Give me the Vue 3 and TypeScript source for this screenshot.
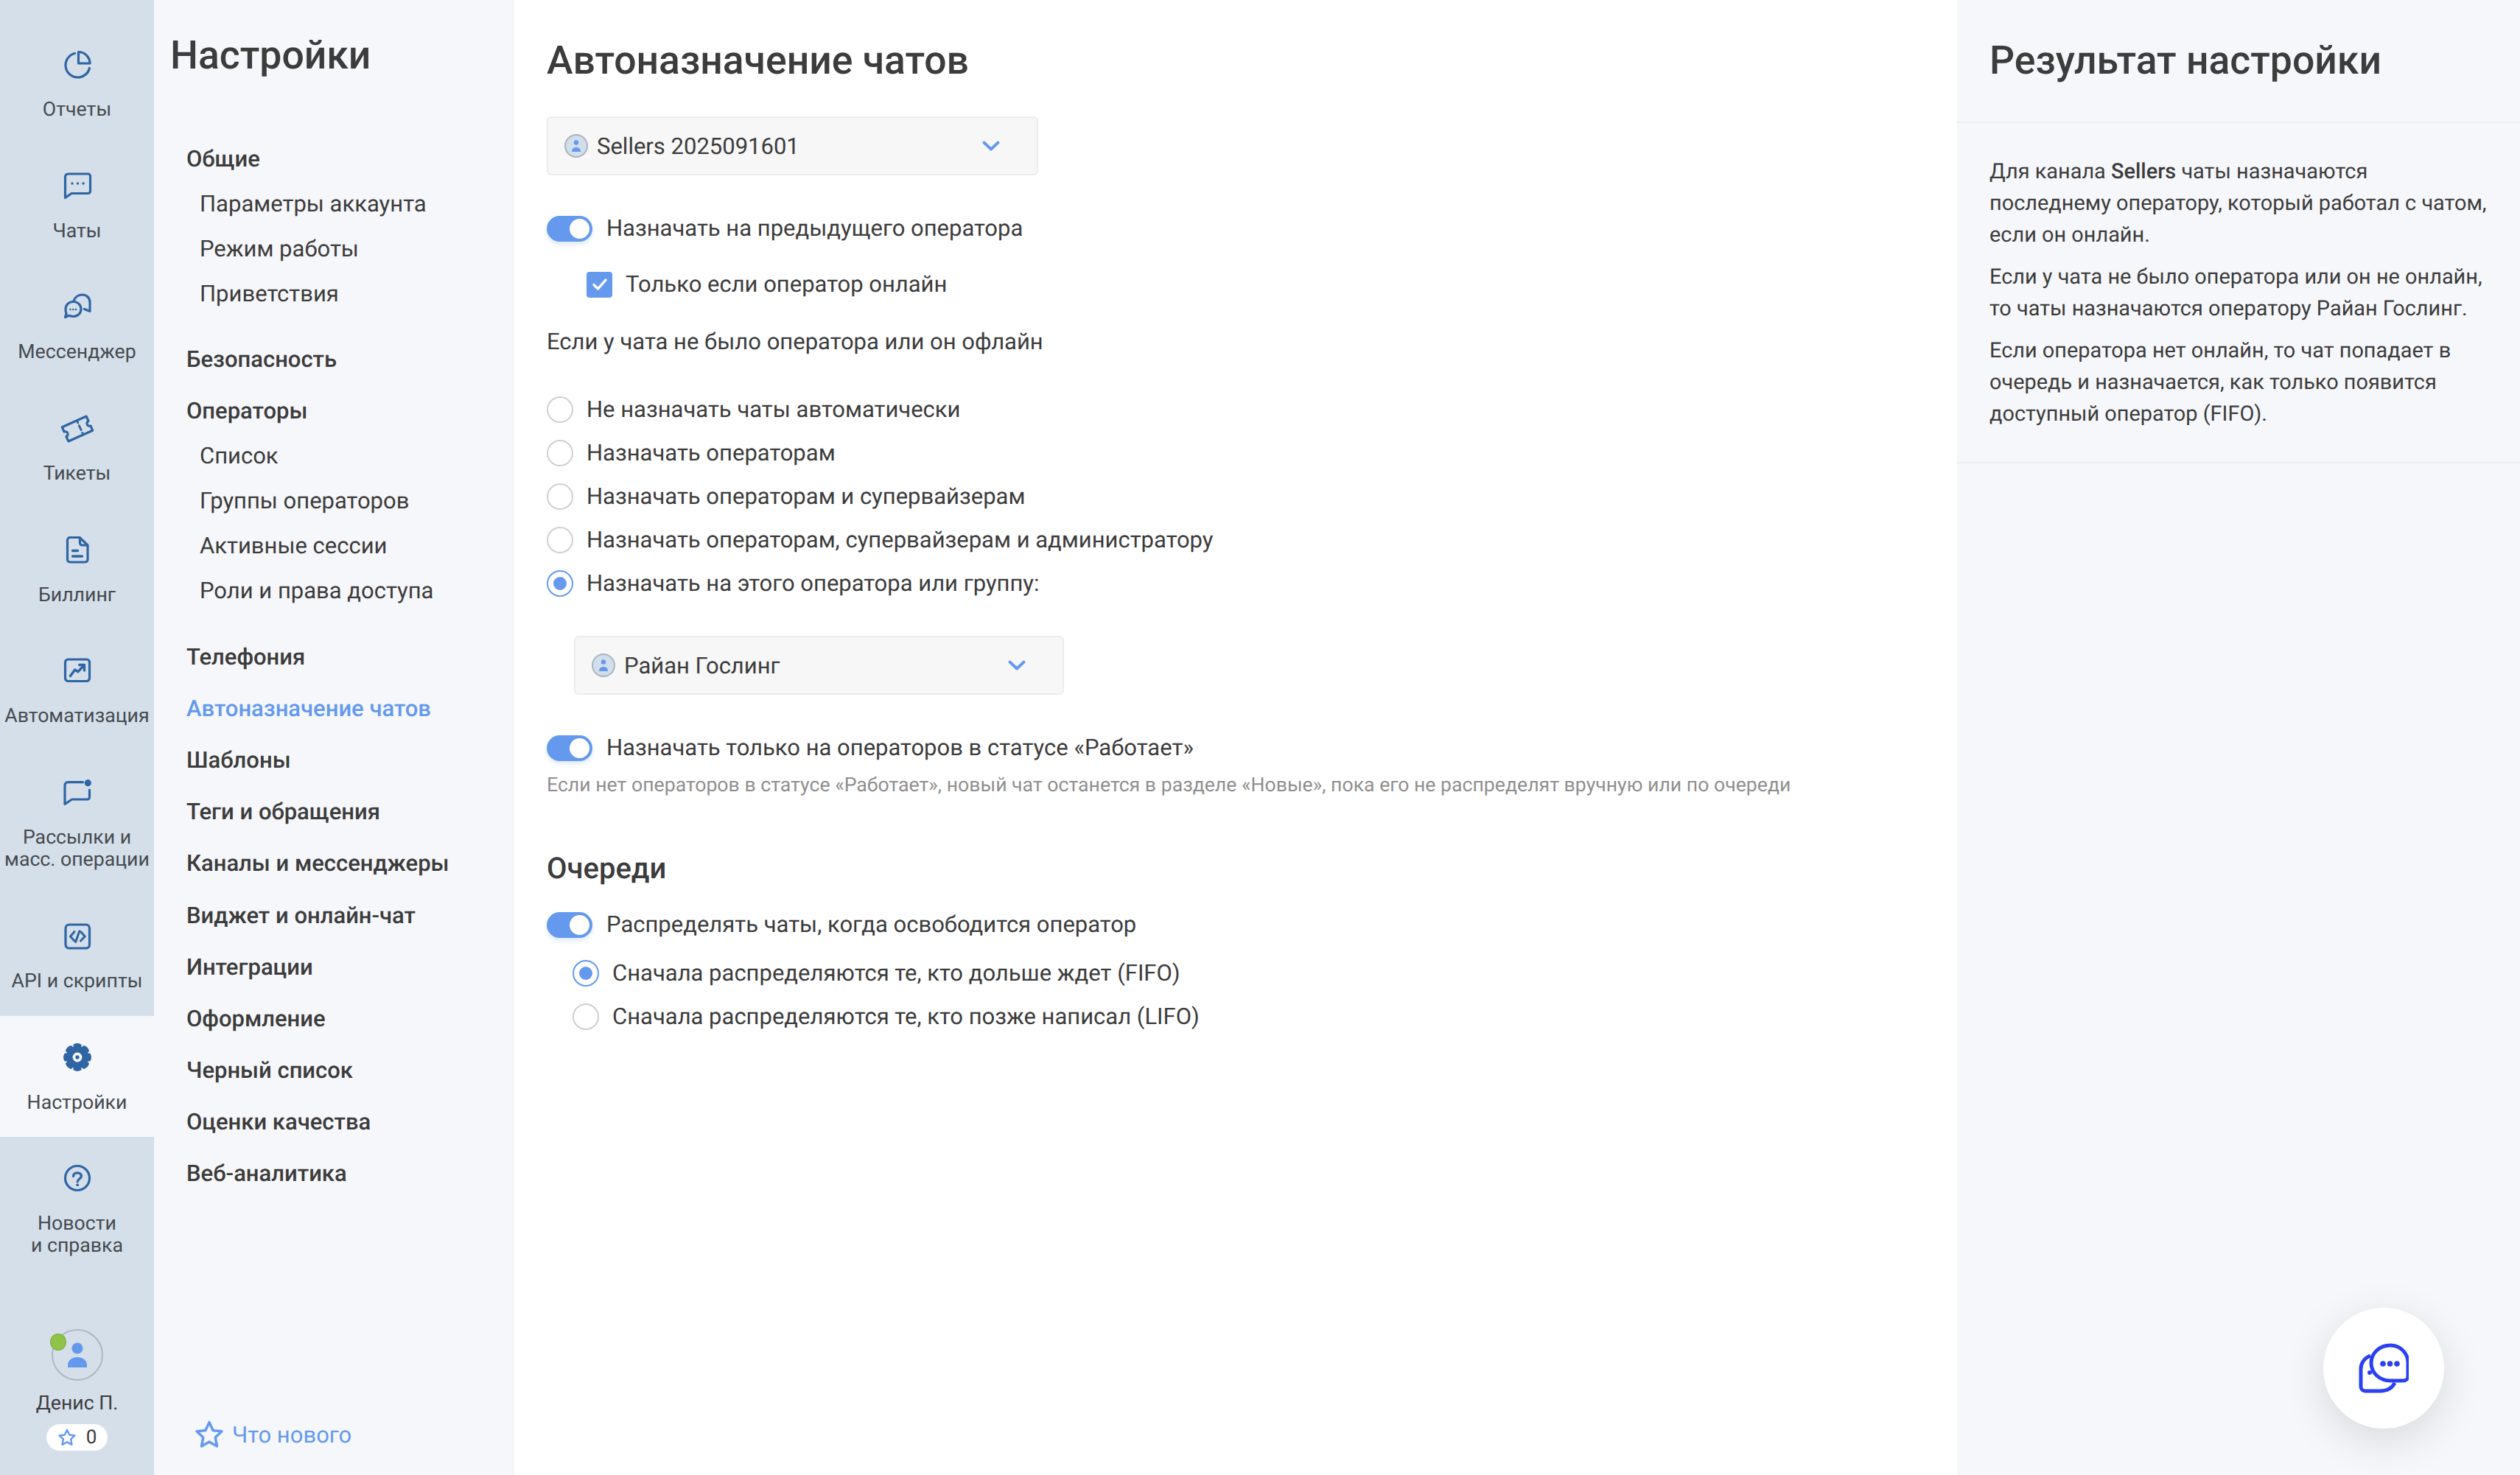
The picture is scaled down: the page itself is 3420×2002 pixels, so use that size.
<script setup lang="ts">
interface RailItem {
  label: string[];
  icon: string;
  active?: boolean;
}

const railItems: RailItem[] = [
  { label: ['Отчеты'], icon: 'report' },
  { label: ['Чаты'], icon: 'chat' },
  { label: ['Мессенджер'], icon: 'messenger' },
  { label: ['Тикеты'], icon: 'ticket' },
  { label: ['Биллинг'], icon: 'billing' },
  { label: ['Автоматизация'], icon: 'auto' },
  { label: ['Рассылки и', 'масс. операции'], icon: 'mailing' },
  { label: ['API и скрипты'], icon: 'api' },
  { label: ['Настройки'], icon: 'gear', active: true },
  { label: ['Новости', 'и справка'], icon: 'help' },
];

interface NavGroup {
  title: string;
  active?: boolean;
  children?: string[];
}

const navGroups: NavGroup[] = [
  { title: 'Общие', children: ['Параметры аккаунта', 'Режим работы', 'Приветствия'] },
  { title: 'Безопасность' },
  { title: 'Операторы', children: ['Список', 'Группы операторов', 'Активные сессии', 'Роли и права доступа'] },
  { title: 'Телефония' },
  { title: 'Автоназначение чатов', active: true },
  { title: 'Шаблоны' },
  { title: 'Теги и обращения' },
  { title: 'Каналы и мессенджеры' },
  { title: 'Виджет и онлайн-чат' },
  { title: 'Интеграции' },
  { title: 'Оформление' },
  { title: 'Черный список' },
  { title: 'Оценки качества' },
  { title: 'Веб-аналитика' },
];

const assignOptions = [
  { label: 'Не назначать чаты автоматически', on: false },
  { label: 'Назначать операторам', on: false },
  { label: 'Назначать операторам и супервайзерам', on: false },
  { label: 'Назначать операторам, супервайзерам и администратору', on: false },
  { label: 'Назначать на этого оператора или группу:', on: true },
];

const queueOptions = [
  { label: 'Сначала распределяются те, кто дольше ждет (FIFO)', on: true },
  { label: 'Сначала распределяются те, кто позже написал (LIFO)', on: false },
];

// gear outline with 8 rounded teeth, hole cut by evenodd
function gearPath(): string {
  const cx = 19;
  const cy = 19;
  let d = '';
  for (let i = 0; i < 8; i++) {
    const a = (i * Math.PI) / 4 - Math.PI / 2;
    const pt = (r: number, off: number) =>
      `${(cx + r * Math.cos(a + off)).toFixed(2)} ${(cy + r * Math.sin(a + off)).toFixed(2)}`;
    d += `${i === 0 ? 'M' : 'L'}${pt(14.5, -0.33)} L${pt(17.5, -0.27)} Q${pt(19.5, 0)} ${pt(17.5, 0.27)} L${pt(14.5, 0.33)} `;
  }
  return d + 'Z M19 11.800a7.200 7.200 0 1 0 0 14.400a7.200 7.200 0 1 0 0-14.400Z';
}
const gear = gearPath();
</script>

<template>
  <div class="page">
    <aside class="rail">
      <div
        v-for="item in railItems"
        :key="item.icon"
        :class="['rail-item', { active: item.active }]"
      >
        <svg class="rail-icon" viewBox="0 0 38 38" fill="none" stroke="#2f65a3" stroke-width="3.200" stroke-linecap="round" stroke-linejoin="round">
          <template v-if="item.icon === 'report'">
            <path d="M15.500 4.500A16.500 16.500 0 1 0 35.500 24.500" />
            <path d="M20.500 2.500V18H36A15.500 15.500 0 0 0 20.500 2.500Z" />
          </template>
          <template v-else-if="item.icon === 'chat'">
            <path d="M2.500 35.500V7a4 4 0 0 1 4-4h27a3 3 0 0 1 3 3V26.500a3 3 0 0 1-3 3H11Z" />
            <g fill="#2f65a3" stroke="none">
              <circle cx="12" cy="16" r="1.700" />
              <circle cx="19.500" cy="16" r="1.700" />
              <circle cx="27" cy="16" r="1.700" />
            </g>
          </template>
          <template v-else-if="item.icon === 'messenger'">
            <path d="M14 11.500C16 6 21 3 26 3C32 3 36 8 36 13.500V25.500L28.500 22.500" />
            <path d="M13.500 12.500C19.500 12.500 24 17 24 22.500S19.500 32.500 13.500 32.500C11 32.500 9 32 7.500 31.300L2.500 33.500L4 28.500C3.300 27 3 25 3 22.500C3 17 7.500 12.500 13.500 12.500Z" />
            <g fill="#2f65a3" stroke="none">
              <circle cx="9.500" cy="23" r="1.300" />
              <circle cx="13.300" cy="23" r="1.300" />
              <circle cx="17" cy="23" r="1.300" />
            </g>
          </template>
          <template v-else-if="item.icon === 'ticket'">
            <g transform="rotate(-24 19 20)">
              <path d="M1 9.500H37V16.500a3.500 3.500 0 0 0 0 7V30.500H1V23.500a3.500 3.500 0 0 0 0-7Z" />
              <path d="M23 10v3M23 17v6.500M23 27.500v3" stroke-width="2.800" />
            </g>
          </template>
          <template v-else-if="item.icon === 'billing'">
            <path d="M22 2.500H9a3.500 3.500 0 0 0-3.500 3.500V32.500a3.500 3.500 0 0 0 3.500 3.500H29.500a3.500 3.500 0 0 0 3.500-3.500V13Z" />
            <path d="M22.500 3V10a3 3 0 0 0 3 3H32" />
            <path d="M12.500 20.500H19.500M12.500 28H25.500" stroke-width="3.400" />
          </template>
          <template v-else-if="item.icon === 'auto'">
            <rect x="2.500" y="4" width="33" height="29.500" rx="4" />
            <path d="M9.500 26.500L15.700 18L20 20.700L28 12" stroke-width="3.400" />
            <path d="M21.700 11.500H28.500V19" stroke-width="3.400" />
          </template>
          <template v-else-if="item.icon === 'mailing'">
            <path d="M26.500 5.700H6a4 4 0 0 0-4 4V35.500L11.500 29H32.500a3 3 0 0 0 3-3V16" />
            <circle cx="33.300" cy="6.700" r="4.600" fill="#2f65a3" stroke="none" />
          </template>
          <template v-else-if="item.icon === 'api'">
            <rect x="3" y="4" width="32.500" height="32" rx="5" />
            <path d="M15 13.500L9.500 20L15 26M23.500 13.500L29.300 20L23.500 26M21.700 13L16.700 27.500" stroke-width="3" />
          </template>
          <template v-else-if="item.icon === 'gear'">
            <path :d="gear" fill="#2f65a3" fill-rule="evenodd" stroke="#2f65a3" stroke-width="1.500" />
            <circle cx="19" cy="19" r="2.700" fill="#2f65a3" stroke="none" />
          </template>
          <template v-else>
            <circle cx="19" cy="19" r="16.500" />
            <path d="M13.500 16.500C13.500 13.500 16 11.800 19 11.800S24.500 13.800 24.500 16.300C24.500 19.800 19.200 20.200 19.200 24" />
            <circle cx="19.200" cy="28.300" r="1.900" fill="#2f65a3" stroke="none" />
          </template>
        </svg>
        <div class="rail-label">
          <div v-for="line in item.label" :key="line">{{ line }}</div>
        </div>
      </div>

      <div class="rail-user">
        <div class="user-avatar">
          <span class="user-dot"></span>
          <svg width="26" height="34" viewBox="0 0 26 34" fill="#6499ee">
            <circle cx="13" cy="8" r="7.600" />
            <path d="M0 34V31C0 24 6 20 13 20S26 24 26 31V34Z" />
          </svg>
        </div>
        <div class="user-name">Денис П.</div>
        <div class="user-badge">
          <svg width="26" height="26" viewBox="0 0 24 24" fill="none" stroke="#6499ee" stroke-width="2.200" stroke-linejoin="round">
            <path d="M12 2.500l2.900 6.300 6.800.8-5 4.700 1.300 6.800-6-3.400-6 3.400 1.300-6.800-5-4.700 6.800-.8Z" />
          </svg>
          <span>0</span>
        </div>
      </div>
    </aside>

    <nav class="settings-nav">
      <h2 class="nav-title">Настройки</h2>
      <div class="nav-list">
        <div v-for="group in navGroups" :key="group.title" class="nav-group">
          <div :class="['nav-head', { active: group.active }]">{{ group.title }}</div>
          <div v-if="group.children" class="nav-subs">
            <div v-for="child in group.children" :key="child" class="nav-sub">{{ child }}</div>
          </div>
        </div>
      </div>
      <div class="nav-new">
        <svg width="44" height="42" viewBox="0 0 24 24" fill="none" stroke="#6499ee" stroke-width="2" stroke-linejoin="round">
          <path d="M12 2.500l2.900 6.300 6.800.8-5 4.700 1.300 6.800-6-3.400-6 3.400 1.300-6.800-5-4.700 6.800-.8Z" />
        </svg>
        <span>Что нового</span>
      </div>
    </nav>

    <main class="content">
      <h1 class="page-title">Автоназначение чатов</h1>

      <div class="select">
        <span class="sel-avatar">
          <svg width="12" height="16" viewBox="0 0 12 16" fill="#6499ee">
            <circle cx="6" cy="3.500" r="3.200" />
            <path d="M0 16c0-4 2.500-6 6-6s6 2 6 6Z" />
          </svg>
        </span>
        <span class="sel-text">Sellers 2025091601</span>
        <svg class="sel-chevron" width="24" height="14" viewBox="0 0 24 14" fill="none" stroke="#6499ee" stroke-width="3.800" stroke-linecap="round" stroke-linejoin="round">
          <path d="M2.500 2.500L12 11.500l9.500-9" />
        </svg>
      </div>

      <label class="row toggle-row first-toggle">
        <span class="toggle"><span class="knob"></span></span>
        <span>Назначать на предыдущего оператора</span>
      </label>
      <label class="row check-row">
        <span class="check">
          <svg width="22" height="18" viewBox="0 0 22 18" fill="none" stroke="#fff" stroke-width="3.400" stroke-linecap="round" stroke-linejoin="round">
            <path d="M3 9.500l5.500 5.500L19 3" />
          </svg>
        </span>
        <span>Только если оператор онлайн</span>
      </label>
      <p class="subhead">Если у чата не было оператора или он офлайн</p>

      <div class="radios">
        <label v-for="opt in assignOptions" :key="opt.label" class="row radio-row">
          <span :class="['radio', { on: opt.on }]"></span>
          <span>{{ opt.label }}</span>
        </label>
      </div>

      <div class="select select-nested">
        <span class="sel-avatar">
          <svg width="12" height="16" viewBox="0 0 12 16" fill="#6499ee">
            <circle cx="6" cy="3.500" r="3.200" />
            <path d="M0 16c0-4 2.500-6 6-6s6 2 6 6Z" />
          </svg>
        </span>
        <span class="sel-text">Райан Гослинг</span>
        <svg class="sel-chevron" width="24" height="14" viewBox="0 0 24 14" fill="none" stroke="#6499ee" stroke-width="3.800" stroke-linecap="round" stroke-linejoin="round">
          <path d="M2.500 2.500L12 11.500l9.500-9" />
        </svg>
      </div>

      <label class="row toggle-row status-toggle">
        <span class="toggle"><span class="knob"></span></span>
        <span>Назначать только на операторов в статусе «Работает»</span>
      </label>
      <p class="hint">Если нет операторов в статусе «Работает», новый чат останется в разделе «Новые», пока его не распределят вручную или по очереди</p>

      <h3 class="section-title">Очереди</h3>
      <label class="row toggle-row queue-toggle">
        <span class="toggle"><span class="knob"></span></span>
        <span>Распределять чаты, когда освободится оператор</span>
      </label>
      <div class="radios queue-radios">
        <label v-for="opt in queueOptions" :key="opt.label" class="row radio-row">
          <span :class="['radio', { on: opt.on }]"></span>
          <span>{{ opt.label }}</span>
        </label>
      </div>
    </main>

    <aside class="result">
      <div class="result-head">Результат настройки</div>
      <div class="result-body">
        <p>Для канала <b>Sellers</b> чаты назначаются последнему оператору, который работал с чатом, если он онлайн.</p>
        <p>Если у чата не было оператора или он не онлайн, то чаты назначаются оператору Райан Гослинг.</p>
        <p>Если оператора нет онлайн, то чат попадает в очередь и назначается, как только появится доступный оператор (FIFO).</p>
      </div>
    </aside>

    <div class="fab">
      <svg width="68" height="68" viewBox="0 0 68 68" fill="none" stroke="#2b40f0" stroke-width="5" stroke-linejoin="round">
        <path d="M16 17C8 20 3 27 3 35v24a6 6 0 0 0 6 6h20c9 0 16-3 20-11" />
        <path d="M43 3c14 0 24 11 24 24v18a6 6 0 0 1-6 6H43C29 51 17 41 17 27S29 3 43 3Z" fill="#fff" />
        <circle cx="15" cy="40" r="3" fill="#2b40f0" stroke="none" />
        <g fill="#2b40f0" stroke="none">
          <circle cx="33" cy="28" r="3.800" />
          <circle cx="42.500" cy="28" r="3.800" />
          <circle cx="52" cy="28" r="3.800" />
        </g>
      </svg>
    </div>
  </div>
</template>

<style scoped>
.page {
  display: flex;
  width: 3420px;
  height: 2002px;
  overflow: hidden;
  position: relative;
  background: #fff;
  color: #3c3c3c;
  font-family: Roboto, "Liberation Sans", sans-serif;
  font-size: 31px;
  text-rendering: geometricPrecision;
}

.rail {
  width: 209px;
  flex-shrink: 0;
  background: #d5dfea;
  padding-top: 31px;
  display: flex;
  flex-direction: column;
  box-sizing: border-box;
}

.rail-item {
  padding: 37px 0 32.700px;
  text-align: center;
}

.rail-item.active { background: #f6f7fa; }

.rail-icon {
  display: block;
  width: 38px;
  height: 38px;
  margin: 0 auto 27px;
  overflow: visible;
}

.rail-label {
  font-size: 26.700px;
  line-height: 30px;
  white-space: nowrap;
  color: #454a4f;
}

.rail-user {
  margin-top: auto;
  padding-bottom: 33px;
  display: flex;
  flex-direction: column;
  align-items: center;
}

.user-avatar {
  position: relative;
  width: 70px;
  height: 70px;
  box-sizing: border-box;
  border: 2px solid #aeb8c3;
  border-radius: 50%;
  display: flex;
  align-items: center;
  justify-content: center;
}

.user-dot {
  position: absolute;
  left: -4px;
  top: 4px;
  width: 22px;
  height: 23px;
  border-radius: 50%;
  background: #8fc349;
  border: 1px solid #7fae3e;
  box-sizing: border-box;
}

.user-name {
  margin-top: 12px;
  font-size: 26.700px;
  line-height: 36px;
}

.user-badge {
  margin-top: 11px;
  width: 83px;
  height: 36px;
  background: #fff;
  border-radius: 18px;
  display: flex;
  align-items: center;
  justify-content: center;
  gap: 13px;
  font-size: 26px;
}

.settings-nav {
  width: 489px;
  flex-shrink: 0;
  box-sizing: border-box;
  background: #f6f7fa;
  padding: 0 0 34px 22px;
  display: flex;
  flex-direction: column;
}

.nav-title {
  margin: 45px 0 0;
  font-size: 53.500px;
  line-height: 62px;
  font-weight: 500;
}

.nav-list {
  margin-top: 78px;
  padding-left: 22px;
}

.nav-group { margin-bottom: 9.200px; }

.nav-head {
  font-weight: 500;
  line-height: 61px;
}

.nav-head.active { color: #6499ee; }

.nav-subs { padding-bottom: 19px; }

.nav-sub {
  padding-left: 18px;
  line-height: 61px;
}

.nav-new {
  margin-top: auto;
  padding-left: 31px;
  display: flex;
  align-items: center;
  gap: 9px;
  color: #6499ee;
}

.content {
  width: 1958px;
  flex-shrink: 0;
  box-sizing: border-box;
  padding: 52px 0 0 44px;
}

.page-title {
  margin: 0;
  font-size: 53.500px;
  line-height: 62px;
  font-weight: 500;
}

.select {
  margin-top: 44px;
  width: 667px;
  height: 80px;
  box-sizing: border-box;
  background: #f7f7f7;
  border: 2px solid #ececec;
  border-radius: 6px;
  padding: 0 50px 0 22px;
  display: flex;
  align-items: center;
}

.select-nested {
  margin: 53px 0 0 37px;
  width: 665px;
}

.sel-avatar {
  width: 32px;
  height: 32px;
  box-sizing: border-box;
  border: 2px solid #a9b4c0;
  background: #d2deeb;
  border-radius: 50%;
  display: flex;
  align-items: center;
  justify-content: center;
}

.sel-text {
  margin-left: 12px;
  flex: 1;
}

.row {
  display: flex;
  align-items: center;
}

.toggle-row { gap: 19px; line-height: 36px; }

.first-toggle { margin-top: 54px; }

.status-toggle { margin-top: 54px; }

.queue-toggle { margin-top: 32px; }

.toggle {
  width: 62px;
  height: 35px;
  border-radius: 18px;
  background: #6499ee;
  display: flex;
  align-items: center;
  justify-content: flex-end;
  padding-right: 4px;
  box-sizing: border-box;
  box-shadow: 0 4px 6px rgba(100, 153, 238, 0.2);
}

.knob {
  width: 27px;
  height: 27px;
  border-radius: 50%;
  background: #fff;
}

.check-row {
  margin: 40px 0 0 54px;
  gap: 18px;
  line-height: 36px;
}

.check {
  width: 35px;
  height: 35px;
  border-radius: 4px;
  background: #6499ee;
  display: flex;
  align-items: center;
  justify-content: center;
}

.subhead {
  margin: 42px 0 0;
  line-height: 36px;
}

.radios {
  margin-top: 56px;
  display: flex;
  flex-direction: column;
  gap: 23px;
}

.radio-row {
  gap: 18px;
  line-height: 36px;
}

.radio {
  width: 36px;
  height: 36px;
  box-sizing: border-box;
  border: 2px solid #d0d0d0;
  border-radius: 50%;
  background: #fff;
  display: flex;
  align-items: center;
  justify-content: center;
}

.radio.on { border-color: #6499ee; }

.radio.on::after {
  content: "";
  width: 18px;
  height: 18px;
  border-radius: 50%;
  background: #6499ee;
}

.hint {
  margin: 16px 0 0;
  font-size: 26.650px;
  line-height: 32px;
  color: #8f8f8f;
}

.section-title {
  margin: 72px 0 0;
  font-size: 40px;
  line-height: 52px;
  font-weight: 500;
}

.queue-radios {
  margin: 30px 0 0 35px;
}

.result {
  flex: 1;
  background: #f6f7fa;
}

.result-head {
  height: 167px;
  box-sizing: border-box;
  padding: 52px 0 0 44px;
  font-size: 53.500px;
  line-height: 62px;
  font-weight: 500;
  border-bottom: 2px solid #ebeef2;
}

.result-body {
  padding: 45px 40px 43px 44px;
  font-size: 28.900px;
  line-height: 43px;
  border-bottom: 2px solid #ebeef2;
}

.result-body p { margin: 0 0 14px; }
.result-body p:last-child { margin-bottom: 0; }
.result-body b { font-weight: 500; }

.fab {
  position: absolute;
  right: 103px;
  bottom: 63px;
  width: 164px;
  height: 164px;
  border-radius: 50%;
  background: #fff;
  box-shadow: 0 16px 60px rgba(0, 0, 0, 0.12);
  display: flex;
  align-items: center;
  justify-content: center;
}
</style>

<style>
body { margin: 0; }
</style>
